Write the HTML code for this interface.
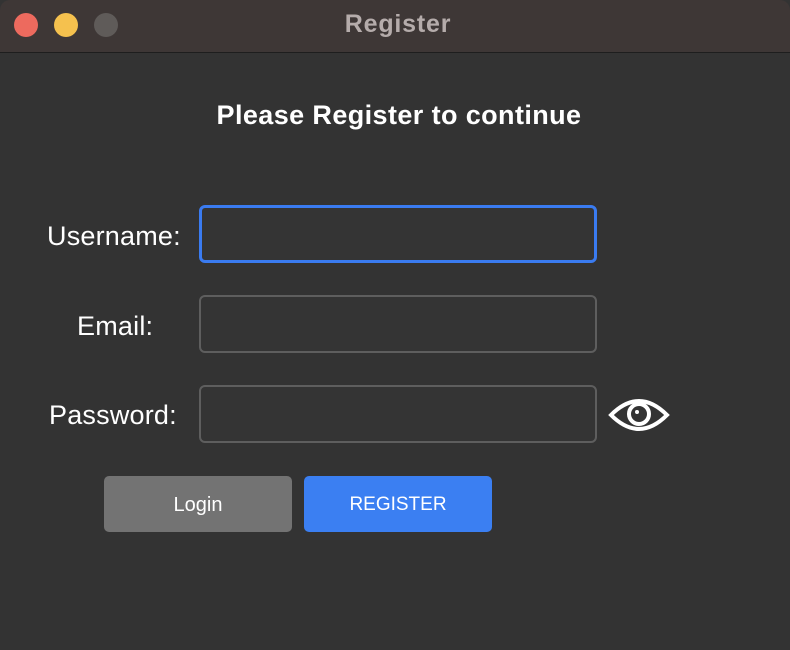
<!DOCTYPE html>
<html><head><meta charset="utf-8"><style>
*{margin:0;padding:0;box-sizing:border-box}
body{width:790px;height:650px;background:#333333;font-family:"Liberation Sans",sans-serif;position:relative;overflow:hidden}
.tb{position:absolute;left:0;top:0;width:790px;height:53px;background:#3e3736;border-bottom:1px solid #1e1e1e;border-radius:10px 10px 0 0}
.dot{position:absolute;top:13px;width:24px;height:24px;border-radius:50%}
.title{position:absolute;top:10px;width:100%;text-align:center;color:#b5acab;font-weight:bold;font-size:25px;letter-spacing:0.8px;padding-left:6px}
.h{position:absolute;top:100px;width:790px;text-align:center;color:#fff;font-weight:bold;font-size:27px;letter-spacing:0.4px;padding-left:8px}
.lbl{position:absolute;color:#fff;font-size:27px;letter-spacing:0.2px}
.in{position:absolute;left:199px;width:398px;height:58px;border:2px solid #5e5e5e;border-radius:6px;background:#343434}
.btn{position:absolute;top:476px;width:188px;height:56px;border-radius:5px;color:#fff;font-size:19px;text-align:center;line-height:58px}
</style></head><body>
<div class="tb">
<div class="dot" style="left:14px;background:#ed6a5e"></div>
<div class="dot" style="left:54px;background:#f5c14e"></div>
<div class="dot" style="left:94px;background:#5f5b59"></div>
<div class="title">Register</div>
</div>
<div class="h">Please Register to continue</div>
<div class="lbl" style="left:47px;top:221px">Username:</div>
<div class="lbl" style="left:77px;top:311px">Email:</div>
<div class="lbl" style="left:49px;top:400px">Password:</div>
<div class="in" style="top:205px;border:3px solid #3a7bf0"></div>
<div class="in" style="top:295px"></div>
<div class="in" style="top:385px"></div>
<svg style="position:absolute;left:608px;top:395px" width="62" height="40" viewBox="0 0 62 40">
<path d="M3 20 Q31 -8 59 20 Q31 48 3 20 Z" fill="none" stroke="#fff" stroke-width="4"/>
<circle cx="31" cy="19" r="10" fill="none" stroke="#fff" stroke-width="4"/>
<circle cx="31" cy="19" r="5" fill="#333"/>
<circle cx="29" cy="17" r="2" fill="#fff"/>
</svg>
<div class="btn" style="left:104px;background:#737373;font-size:20px">Login</div>
<div class="btn" style="left:304px;background:#3b7ff2">REGISTER</div>
</body></html>
